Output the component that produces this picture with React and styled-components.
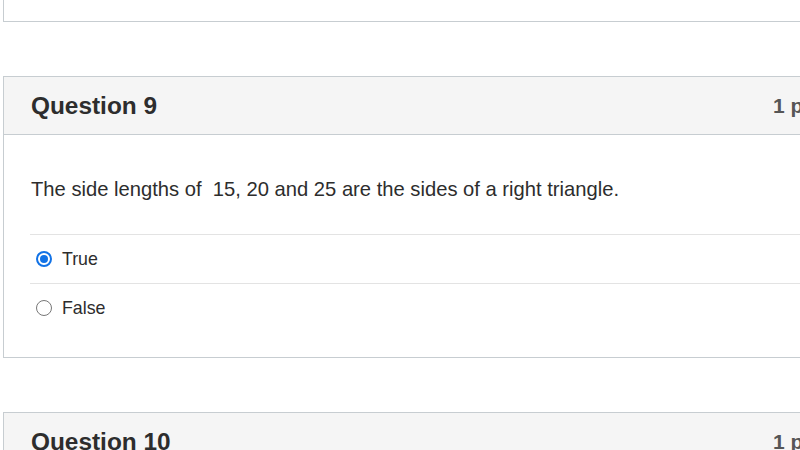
import React from "react";
import styled, { createGlobalStyle } from "styled-components";

const Global = createGlobalStyle`
  html, body { margin: 0; padding: 0; background: #fff; overflow: hidden; }
  body { font-family: "Liberation Sans", Arial, sans-serif; color: #2d3b45; }
  #root { width: 800px; height: 450px; overflow: hidden; }
`;

const Page = styled.div`
  display: flex;
  flex-direction: column;
  gap: 54px;
  padding-left: 3px;
  width: 847px;
`;

const Card = styled.section`
  border: 1px solid #c7cdd1;
  border-top: ${(p) => (p.$cut ? "none" : "1px solid #c7cdd1")};
  background: #fff;
  height: ${(p) => (p.$cut ? "21px" : "auto")};
  flex-shrink: 0;
`;

const Header = styled.header`
  display: flex;
  align-items: center;
  justify-content: space-between;
  height: 57px;
  padding: 0 27px;
  background: #f5f5f5;
  border-bottom: 1px solid #c7cdd1;
`;

const Title = styled.h2`
  margin: 0;
  font-size: 24.4px;
  font-weight: 700;
  color: #2d2d2d;
`;

const Points = styled.span`
  font-size: 21px;
  font-weight: 700;
  color: #565656;
`;

const Body = styled.div`
  padding: 40px 0 25px 26px;
`;

const QuestionText = styled.p`
  margin: 0 0 32px 1px;
  font-size: 20.2px;
  line-height: 27px;
  color: #2d2d2d;
  position: relative;
  top: 1px;
`;

const Answer = styled.label`
  display: flex;
  align-items: center;
  height: 48px;
  border-top: 1px solid #e3e3e3;
  gap: 10px;
  padding-left: 6px;
  font-size: 17.8px;
  color: #2d2d2d;
`;

const Radio = styled.span`
  width: 16px;
  height: 16px;
  border-radius: 50%;
  box-sizing: border-box;
  border: ${(p) => (p.$checked ? "2px solid #1172e6" : "1px solid #777")};
  background: #fff;
  display: flex;
  align-items: center;
  justify-content: center;
  &::after {
    content: "";
    display: ${(p) => (p.$checked ? "block" : "none")};
    width: 8px;
    height: 8px;
    border-radius: 50%;
    background: #1172e6;
  }
`;

const answers = [
  { label: "True", checked: true },
  { label: "False", checked: false },
];

export default function App() {
  return (
    <>
      <Global />
      <Page>
        <Card $cut />
        <Card>
          <Header>
            <Title>Question 9</Title>
            <Points>1 pts</Points>
          </Header>
          <Body>
            <QuestionText>
              The side lengths of&nbsp; 15, 20 and 25 are the sides of a right triangle.
            </QuestionText>
            {answers.map((a) => (
              <Answer key={a.label}>
                <Radio $checked={a.checked} />
                {a.label}
              </Answer>
            ))}
          </Body>
        </Card>
        <Card>
          <Header>
            <Title>Question 10</Title>
            <Points>1 pts</Points>
          </Header>
        </Card>
      </Page>
    </>
  );
}
